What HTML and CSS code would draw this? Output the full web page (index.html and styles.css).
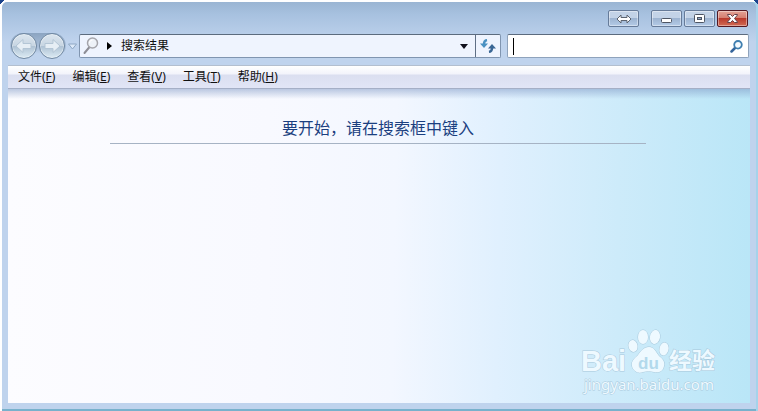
FILE: index.html
```html
<!DOCTYPE html>
<html lang="zh-CN">
<head>
    <meta charset="UTF-8">
    <meta name="viewport" content="width=device-width, initial-scale=1.0">
    <title>搜索结果</title>
    <link rel="stylesheet" href="styles.css">
</head>
<body>

    <div class="window">
        <div class="titlebar">
            <button class="win-btn resize" type="button" aria-label="Resize">
                <svg width="16" height="10" viewBox="0 0 16 10"><path d="M1 5L5 1V3.500H11V1L15 5L11 9V6.500H5V9Z" fill="#fff" stroke="#5c6470"/></svg>
            </button>
            <button class="win-btn" type="button" aria-label="Minimize">
                <svg width="13" height="11" viewBox="0 0 13 11"><rect x="1.500" y="5.500" width="10" height="4" rx="1" fill="#fff" stroke="#4d5563"/></svg>
            </button>
            <button class="win-btn" type="button" aria-label="Maximize">
                <svg width="13" height="11" viewBox="0 0 13 11"><rect x="1.500" y="1.500" width="10" height="8" rx="1" fill="#fff" stroke="#4d5563"/><rect x="4.500" y="4.500" width="4" height="2" fill="#93aac8" stroke="#4d5563"/></svg>
            </button>
            <button class="win-btn close" type="button" aria-label="Close">
                <svg width="13" height="11" viewBox="0 0 13 11"><path d="M1.500 1.500H4.500L6.500 3.500L8.500 1.500H11.500V2L8.500 5.500L11.500 9V9.500H8.500L6.500 7.500L4.500 9.500H1.500V9L4.500 5.500L1.500 2Z" fill="#fff" stroke="#64414a"/></svg>
            </button>
        </div>

        <div class="toolbar">
            <div class="nav">
                <div class="nav-pair">
                    <button class="nav-btn" type="button" aria-label="Back">
                        <svg width="18" height="16" viewBox="0 0 18 16"><path d="M1 8L8 1.500V5.500H16V10.500H8V14.500Z" fill="#e6eef5" stroke="#b3c5d5"/></svg>
                    </button>
                    <button class="nav-btn" type="button" aria-label="Forward">
                        <svg width="18" height="16" viewBox="0 0 18 16"><path d="M17 8L10 1.500V5.500H2V10.500H10V14.500Z" fill="#e6eef5" stroke="#b3c5d5"/></svg>
                    </button>
                </div>
                <button class="nav-more" type="button" aria-label="Recent pages">
                    <svg width="9" height="7" viewBox="0 0 9 7"><path d="M.5 1H8.500L4.500 6Z" fill="#dce9f8" stroke="#8ea7c4"/></svg>
                </button>
            </div>

            <div class="address">
                <svg class="address-icon" width="16" height="18" viewBox="0 0 16 18"><path d="M6.500 10L1.500 16" stroke="#8e8e96" stroke-width="2" stroke-linecap="round"/><circle cx="9.500" cy="6" r="5" fill="#eef2f8" stroke="#a5a5ab" stroke-width="1.500"/><path d="M6.500 6A3 3 0 0 1 9.500 3" fill="none" stroke="#fff"/></svg>
                <svg class="crumb-arrow" width="5" height="8" viewBox="0 0 5 8"><path d="M0 0L5 4L0 8Z"/></svg>
                <span class="crumb">搜索结果</span>
                <button class="drop" type="button" aria-label="History">
                    <svg width="8" height="5" viewBox="0 0 8 5"><path d="M0 0H8L4 5Z" fill="#10101c"/></svg>
                </button>
                <button class="refresh" type="button" aria-label="Refresh">
                    <svg width="16" height="14" viewBox="0 0 16 14"><path d="M7 1Q4 1.500 4 5" fill="none" stroke="#4a91c2" stroke-width="2.400"/><path d="M0 4.500H8L4 9Z" fill="#4a91c2"/><path d="M9 13Q12 12.500 12 9" fill="none" stroke="#3a6795" stroke-width="2.400"/><path d="M8 9.500H16L12 5Z" fill="#3a6795"/></svg>
                </button>
            </div>

            <div class="search">
                <span class="caret"></span>
                <input class="search-input" type="text" aria-label="搜索">
                <button class="search-btn" type="button" aria-label="Search">
                    <svg width="13" height="13" viewBox="0 0 13 13"><path d="M5.500 7.500L1.500 11.500" stroke="#34649b" stroke-width="2.500" stroke-linecap="round"/><circle cx="8" cy="4.800" r="3.800" fill="#f4faff" stroke="#3f7fb0" stroke-width="1.800"/></svg>
                </button>
            </div>
        </div>

        <nav class="menubar">
            <button class="menu" type="button">文件(<u>F</u>)</button>
            <button class="menu" type="button">编辑(<u>E</u>)</button>
            <button class="menu" type="button">查看(<u>V</u>)</button>
            <button class="menu" type="button">工具(<u>T</u>)</button>
            <button class="menu" type="button">帮助(<u>H</u>)</button>
        </nav>

        <main class="content">
            <h1 class="hint">要开始，请在搜索框中键入</h1>
            <svg class="brand" width="140" height="70" viewBox="0 0 140 70">
                <g class="brand-ink">
                    <ellipse cx="53" cy="18" rx="4.500" ry="6" transform="rotate(-12 53 18)"/>
                    <ellipse cx="63" cy="9" rx="5" ry="7"/>
                    <ellipse cx="75" cy="9" rx="5" ry="7" transform="rotate(10 75 9)"/>
                    <ellipse cx="84" cy="21" rx="4.500" ry="6.500" transform="rotate(12 84 21)"/>
                    <path d="M69 19C74 19 76 24 79 28C83 31 85 34 84 38C83 44 78 45 74 44C70 43 67 43 63 44C58 46 53 43 52 38C51 33 55 30 58 27C61 23 64 19 69 19Z"/>
                    <text class="brand-bai" x="1" y="43">Bai</text>
                    <text class="brand-cn" x="89" y="41">经验</text>
                    <text class="brand-url" x="4" y="62">jingyan.baidu.com</text>
                </g>
                <text class="brand-du" x="58" y="41">du</text>
            </svg>
        </main>
    </div>

</body>
</html>
```
FILE: styles.css
```css
* {
    box-sizing: border-box;
}
body {
    margin: 0;
    min-height: 100vh;
    padding: 2px 2px 0;
    display: flex;
    font-family: "Noto Sans", "Noto Sans CJK SC", sans-serif;
    font-size: 12px;
    color: #111;
    background:
        linear-gradient(135deg, #1b438c 3px, transparent 3px),
        linear-gradient(225deg, #1b438c 3px, transparent 3px),
        linear-gradient(#fff 2px, transparent 2px),
        linear-gradient(90deg, #fff 50%, #a5d3ea 50%);
}
button {
    display: flex;
    align-items: center;
    justify-content: center;
    padding: 0;
    border: 0;
    background: none;
    font: inherit;
    color: inherit;
}
svg {
    display: block;
    flex: none;
}
.window {
    flex: 1;
    display: flex;
    flex-direction: column;
    padding: 0 6px 6px;
    border-bottom: 2px solid #78b1cc;
    border-radius: 5px 5px 0 0;
    background: linear-gradient(#9ab5d3, #a7c1df 12px, #bfd3ed 40px, #bfd3ed);
}

/* title bar */
.titlebar {
    display: flex;
    justify-content: flex-end;
    gap: 2px;
    padding: 8px 2px 0;
}
.win-btn {
    width: 31px;
    height: 17px;
    border: 1px solid #667b99;
    border-radius: 2px;
    background: linear-gradient(#c3d3e7 50%, #9db4d1 50%, #b4cbe7);
    box-shadow: inset 0 0 0 1px rgba(255, 255, 255, 0.4);
}
.resize {
    margin-right: 10px;
}
.close {
    border-color: #541821;
    background: linear-gradient(#e3a295, #d47b6c 50%, #b93a2c 50%, #d16b55);
}

/* address bar */
.toolbar {
    display: flex;
    align-items: center;
    padding: 6px 1px 6px 2px;
}
.nav {
    display: flex;
    align-items: center;
    width: 69px;
}
.nav-pair {
    display: flex;
    gap: 2px;
    padding: 0 1px;
    border-radius: 13px;
    background: linear-gradient(#8ba4c1, #adc2dc 60%, #bfd3ed 80%);
}
.nav-btn {
    width: 26px;
    height: 26px;
    border: 1px solid #7088a2;
    border-radius: 50%;
    background: linear-gradient(#dce6ef, #c7d5e2 50%, #adc1d3 50%, #dcebf4);
    box-shadow: inset 0 0 0 1px rgba(255, 255, 255, 0.4);
}
.nav-more {
    width: 14px;
    height: 24px;
}
.address {
    flex: 420;
    display: flex;
    align-items: center;
    height: 24px;
    border: 1px solid #8095b0;
    border-top-color: #5c6b7e;
    border-radius: 2px;
    background: #eff4fe;
}
.address-icon {
    margin-left: 3px;
}
.crumb-arrow {
    margin: 0 9px 0 8px;
}
.crumb {
    padding-bottom: 2px;
}
.drop {
    width: 22px;
    height: 22px;
    margin-left: auto;
}
.refresh {
    width: 25px;
    height: 22px;
    border-left: 1px solid #5f6f85;
}
.search {
    flex: 240;
    display: flex;
    align-items: center;
    height: 24px;
    margin-left: 6px;
    border: 1px solid #8fa3bc;
    border-top-color: #5c6b7e;
    border-radius: 2px;
    background: #fff;
}
.caret {
    width: 1px;
    height: 17px;
    margin-left: 5px;
    background: #000;
}
.search-input {
    flex: 1;
    min-width: 0;
    height: 20px;
    padding: 0;
    border: 0;
    outline: 0;
    font: inherit;
    background: none;
}
.search-btn {
    margin-right: 5px;
}

/* menu */
.menubar {
    display: flex;
    gap: 17px;
    height: 24px;
    padding: 0 10px;
    border-top: 1px solid #b3bfcf;
    border-bottom: 1px solid #a5afc6;
    background: linear-gradient(#fff, #f2f3fb 8px, #dbdff0 9px, #e1e5f6);
}
.menu {
    display: block;
    height: 22px;
    line-height: 20px;
}
.menu u {
    text-underline-offset: 1px;
}

/* page */
.content {
    flex: 1;
    display: flex;
    flex-direction: column;
    padding: 0 30px 5px 102px;
    background:
        linear-gradient(rgba(125, 150, 195, 0.5), rgba(160, 180, 215, 0) 10px),
        linear-gradient(91deg, #fcfcff, #f8f9ff 35%, #f3f7ff 52%, #e0f0fe 66%, #cdebfa 82%, #b9e6f7);
}
.hint {
    margin: 26px 74px 0 0;
    padding-bottom: 4px;
    border-bottom: 1px solid #a6b3c4;
    font-family: "Noto Sans CJK SC", sans-serif;
    font-size: 16px;
    font-weight: 400;
    line-height: 24px;
    text-align: center;
    color: #1b3f80;
}
.brand {
    margin: auto 0 0 auto;
}
.brand-ink {
    fill: #eef9ff;
    stroke: #a9c9dc;
    stroke-width: 1px;
    paint-order: stroke;
}
.brand-bai {
    font: bold 29px "Liberation Sans", sans-serif;
}
.brand-cn {
    font: bold 23px "Noto Sans CJK SC", sans-serif;
}
.brand-url {
    font: 15px "Noto Sans", sans-serif;
}
.brand-du {
    font: bold 17px "Liberation Sans", sans-serif;
    fill: #b3d9ec;
}
```
